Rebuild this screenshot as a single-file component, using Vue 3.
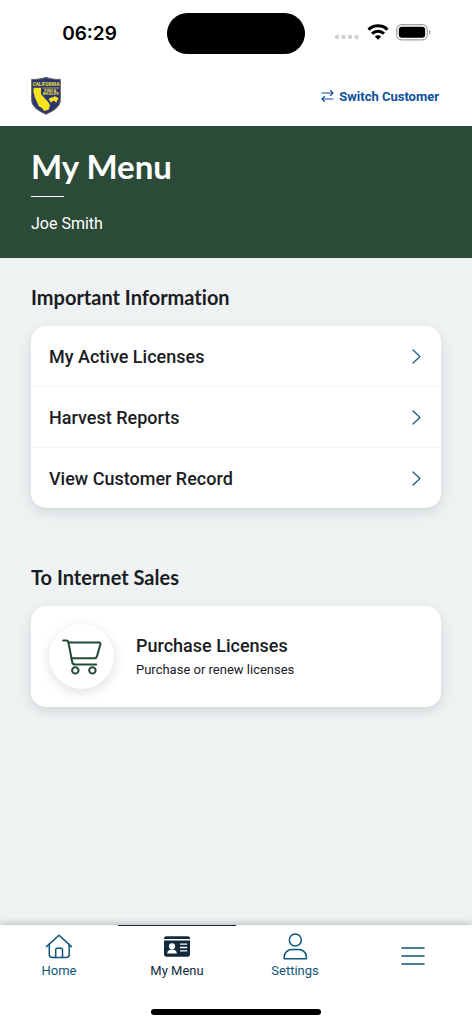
<template>
  <div class="app-screen">
    <div class="status-bar">
      <div class="status-time">06:29</div>
      <div class="island"></div>
      <div class="status-icons">
        <svg class="signal" width="26" height="6" viewBox="0 0 26 6" aria-hidden="true">
          <circle cx="3" cy="3" r="2.2" />
          <circle cx="9.5" cy="3" r="2.2" />
          <circle cx="16" cy="3" r="2.2" />
          <circle cx="22.5" cy="3" r="2.2" />
        </svg>
        <svg width="22" height="17" viewBox="0 0 22 17" fill="none" stroke="#000" stroke-width="3" aria-hidden="true">
          <path d="M1.5 5.6C6.8 .6 15.2 .6 20.5 5.6" />
          <path d="M5 9.6C8.4 6.4 13.6 6.4 17 9.6" />
          <path d="M7.8 12.6C9.6 10.9 12.4 10.9 14.2 12.6L11 15.8z" fill="#000" stroke="none" />
        </svg>
        <svg width="36" height="17" viewBox="0 0 36 17" aria-hidden="true">
          <rect x=".7" y=".7" width="30.6" height="15.2" rx="5" fill="none" stroke="#a0a0a0" stroke-width="1.2" />
          <rect x="2.8" y="2.8" width="26.4" height="11" rx="3.2" fill="#000" />
          <path d="M33 5.8C35 6.6 35 10 33 10.8z" fill="#a0a0a0" />
        </svg>
      </div>
    </div>

    <header class="top-bar">
      <svg class="logo" width="30" height="38" viewBox="0 0 90 114" role="img" aria-label="California Fish &amp; Wildlife">
        <path d="M2 7C14 8 32 6 45 1C58 6 76 8 88 7V68C88 91 67 101 45 112C23 101 2 91 2 68z" fill="#2b3572" stroke="#68684f" stroke-width="3" />
        <text x="45" y="26" text-anchor="middle" font-size="14" font-weight="700" fill="#f0e03c">CALIFORNIA</text>
        <path d="M8 32H30V51L52 76L57 84L53 98L39 102L34 94L23 87L18 75L11 60L7 43z" fill="#f8e41c" />
        <path d="M34 33H84" stroke="#a9a653" stroke-width="3" />
        <text x="58" y="45" text-anchor="middle" font-size="12" font-weight="700" fill="#f0e03c">FISH &amp;</text>
        <text x="59" y="55" text-anchor="middle" font-size="11" font-weight="700" fill="#f0e03c">WILDLIFE</text>
        <path d="M53 67L58 62L66 61L71 58L78 60L83 66L80 69L77 69L79 76H73L71 72L64 72L63 76H57L58 71L54 70z" fill="#f8e41c" />
      </svg>
      <button type="button" class="switch-btn">
        <svg width="13" height="14" viewBox="0 0 13 14" fill="none" stroke="currentColor" stroke-width="1.2" stroke-linecap="round" stroke-linejoin="round" aria-hidden="true">
          <path d="M1 4H12M9.4 1.4L12 4L9.4 6.6M12 10H1M3.6 7.4L1 10L3.6 12.6" />
        </svg>
        Switch Customer
      </button>
    </header>

    <div class="banner">
      <h1 class="banner-title">My Menu</h1>
      <div class="banner-rule"></div>
      <div class="banner-name">Joe Smith</div>
    </div>

    <main class="content">
      <section class="section">
        <h2 class="section-title">Important Information</h2>
        <div class="card">
          <a v-for="item in infoLinks" :key="item" href="#" class="info-row">
            {{ item }}
            <svg width="9" height="15" viewBox="0 0 9 15" fill="none" stroke="#1d6186" stroke-width="1.3" stroke-linecap="round" stroke-linejoin="round" aria-hidden="true">
              <path d="M1 1L8 7.5L1 14" />
            </svg>
          </a>
        </div>
      </section>

      <section class="section">
        <h2 class="section-title">To Internet Sales</h2>
        <a href="#" class="card sales-card">
          <span class="cart-circle">
            <svg width="40" height="36" viewBox="0 0 40 36" fill="none" stroke="#234a34" stroke-width="2" stroke-linecap="round" stroke-linejoin="round" aria-hidden="true">
              <path d="M1.2 1.4H4.5C5.5 1.4 6.1 1.9 6.3 2.8L10.2 23C10.5 24.8 11.5 25.6 13 25.6H34.2" />
              <path d="M6.6 3.5H37C38.2 3.5 38.7 4.2 38.4 5.3L35 17.2C34.6 18.6 33.8 19.2 32.5 19.2H9.5" />
              <circle cx="13.3" cy="31.4" r="3.2" />
              <circle cx="30.4" cy="31.4" r="3.2" />
            </svg>
          </span>
          <span class="sales-text">
            <span class="sales-title">Purchase Licenses</span>
            <span class="sales-sub">Purchase or renew licenses</span>
          </span>
        </a>
      </section>
    </main>

    <nav class="tab-bar">
      <a href="#" class="tab">
        <svg width="28" height="28" viewBox="0 0 28 28" fill="none" stroke="currentColor" stroke-width="1.5" stroke-linecap="round" stroke-linejoin="round" aria-hidden="true">
          <path d="M1.5 13.6L14 2.2L26.5 13.6" />
          <path d="M4.3 11.3V21.5C4.3 23.5 5.3 24.5 7.3 24.5H21.2C23.2 24.5 24.2 23.5 24.2 21.5V11.3" />
          <path d="M10.7 24.5V16.7C10.7 15.7 11.2 15.2 12.2 15.2H16C17 15.2 17.5 15.7 17.5 16.7V24.5" />
        </svg>
        Home
      </a>
      <a href="#" class="tab active" aria-current="page">
        <svg width="28" height="28" viewBox="0 0 28 28" aria-hidden="true">
          <path d="M1 6V5.5C1 4 2 3.2 3.4 3.2H24.6C26 3.2 27 4 27 5.5V6z" fill="currentColor" />
          <path d="M1 7.4H27V21.2C27 22.8 26 23.7 24.6 23.7H3.4C2 23.7 1 22.8 1 21.2z" fill="currentColor" />
          <circle cx="9" cy="13.3" r="3.1" fill="#fff" />
          <path d="M4.2 20.5C4.2 17.8 6 16.7 7.6 16.7H10.4C12 16.7 13.8 17.8 13.8 20.5z" fill="#fff" />
          <path d="M17 11.1H24.2M17 14.5H24.2M17 17.9H24.2" stroke="#fff" stroke-width="1.4" />
        </svg>
        My Menu
      </a>
      <a href="#" class="tab">
        <svg width="28" height="28" viewBox="0 0 28 28" fill="none" stroke="currentColor" stroke-width="1.5" stroke-linejoin="round" aria-hidden="true">
          <circle cx="14.3" cy="7" r="6" />
          <path d="M3.2 25.8V24C3.2 19.5 6.8 16.6 11 16.6H17.6C21.8 16.6 25.4 19.5 25.4 24V25.8z" />
        </svg>
        Settings
      </a>
      <button type="button" class="tab tab-more" aria-label="More">
        <svg width="24" height="20" viewBox="0 0 24 20" stroke="currentColor" stroke-width="1.6" stroke-linecap="round" aria-hidden="true">
          <path d="M1 2H23M1 10H23M1 18H23" />
        </svg>
      </button>
    </nav>
    <div class="home-area">
      <div class="home-indicator"></div>
    </div>
  </div>
</template>

<script setup>
const infoLinks = ['My Active Licenses', 'Harvest Reports', 'View Customer Record']
</script>

<style>
body {
  margin: 0;
}
</style>

<style scoped>
.app-screen {
  min-height: 100vh;
  display: flex;
  flex-direction: column;
  background: #eef2f3;
  font-family: Roboto, 'Liberation Sans', sans-serif;
  color: #1a1c1f;
}

a {
  color: inherit;
  text-decoration: none;
}

button {
  border: 0;
  padding: 0;
  background: none;
  font: inherit;
  cursor: pointer;
}

svg {
  display: block;
  flex-shrink: 0;
}

.status-bar {
  display: grid;
  grid-template-columns: 1fr 138px 1fr;
  align-items: center;
  height: 66px;
  background: #fff;
}

.status-time {
  padding-left: 12px;
  text-align: center;
  font-family: Inter, sans-serif;
  font-size: 19px;
  font-weight: 600;
  color: #000;
}

.island {
  height: 41px;
  border-radius: 21px;
  background: #000;
}

.status-icons {
  display: flex;
  align-items: center;
  justify-content: flex-end;
  gap: 7px;
  padding: 0 40px 2px 0;
}

.signal {
  margin-top: 10px;
  fill: #d0d0d0;
}

.top-bar {
  display: flex;
  align-items: center;
  justify-content: space-between;
  height: 60px;
  padding: 0 33px 0 31px;
  background: #fff;
}

.switch-btn {
  display: flex;
  align-items: center;
  gap: 5px;
  font-size: 13px;
  font-weight: 700;
  color: #0d4f9c;
}

.banner {
  padding: 20px 31px 24px;
  background: #2b4a38;
  color: #fff;
}

.banner-title {
  margin: 0;
  font-family: Lato, sans-serif;
  font-size: 33px;
  font-weight: 700;
  line-height: 40px;
}

.banner-rule {
  width: 33px;
  height: 1px;
  margin: 10px 0 16px;
  background: #fff;
}

.banner-name {
  font-size: 16px;
  line-height: 21px;
}

.content {
  flex: 1;
  padding: 26px 31px;
}

.section {
  margin-bottom: 56px;
}

.section-title {
  margin: 0 0 16px;
  font-family: Lato, sans-serif;
  font-size: 20px;
  font-weight: 700;
  font-variant-ligatures: none;
  line-height: 26px;
}

.card {
  border-radius: 15px;
  background: #fff;
  box-shadow: 0 4px 12px rgba(30, 50, 60, 0.14);
}

.info-row {
  display: flex;
  align-items: center;
  justify-content: space-between;
  height: 60px;
  padding: 0 20px 0 18px;
  font-size: 18px;
  font-weight: 500;
}

.info-row + .info-row {
  border-top: 1px solid #f5f6f6;
}

.sales-card {
  display: flex;
  align-items: center;
  gap: 22px;
  padding: 18px;
}

.cart-circle {
  display: flex;
  align-items: center;
  justify-content: center;
  width: 65px;
  height: 65px;
  border-radius: 50%;
  background: #fff;
  box-shadow: 0 3px 12px rgba(30, 50, 60, 0.16);
}

.sales-text {
  display: flex;
  flex-direction: column;
  gap: 4px;
}

.sales-title {
  font-size: 18px;
  font-weight: 500;
  line-height: 22px;
}

.sales-sub {
  font-size: 13px;
  line-height: 18px;
}

.tab-bar {
  display: grid;
  grid-template-columns: repeat(4, 1fr);
  height: 66px;
  background: #fff;
  box-shadow: 0 -2px 6px rgba(0, 0, 0, 0.2);
}

.tab {
  display: flex;
  flex-direction: column;
  align-items: center;
  gap: 2px;
  padding-top: 7px;
  border-top: 1px solid transparent;
  font-size: 13px;
  line-height: 16px;
  color: #0f557b;
}

.tab.active {
  border-top-color: #102a3c;
  color: #102a3c;
}

.tab-more {
  justify-content: center;
  padding: 0 0 6px;
}

.home-area {
  display: flex;
  justify-content: center;
  padding: 18px 0 9px;
  background: #fff;
  z-index: 1;
}

.home-indicator {
  width: 36%;
  height: 6px;
  border-radius: 3px;
  background: #000;
}
</style>
